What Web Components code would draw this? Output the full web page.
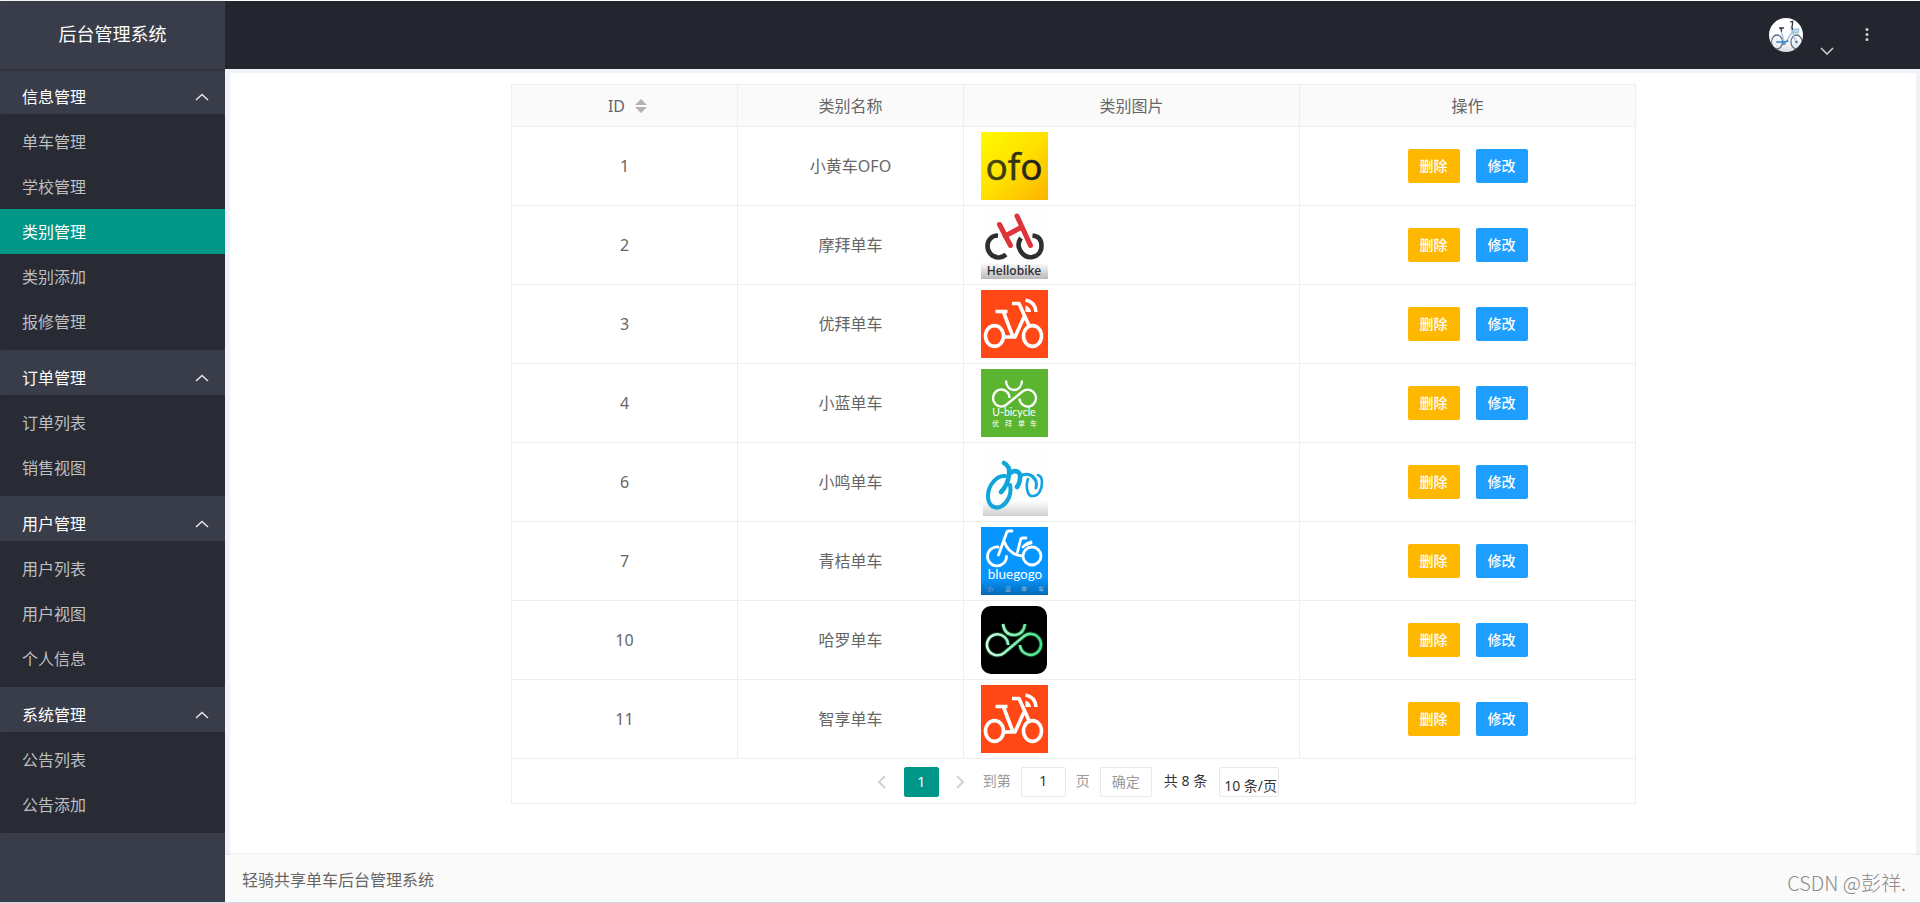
<!DOCTYPE html>
<html lang="zh-CN">
<head>
<meta charset="utf-8">
<meta name="viewport" content="width=device-width, initial-scale=1">
<title>后台管理系统</title>
<style>
  body {
    margin: 0;
    background: #fff;
    color: #666;
    font: 16px/24px "Noto Sans", "Noto Sans CJK SC", sans-serif;
  }
</style>
</head>
<body>
<admin-shell>
  <side-nav slot="side" heading="后台管理系统">
    <nav-group label="信息管理">
      <nav-item>单车管理</nav-item>
      <nav-item>学校管理</nav-item>
      <nav-item current>类别管理</nav-item>
      <nav-item>类别添加</nav-item>
      <nav-item>报修管理</nav-item>
    </nav-group>
    <nav-group label="订单管理">
      <nav-item>订单列表</nav-item>
      <nav-item>销售视图</nav-item>
    </nav-group>
    <nav-group label="用户管理">
      <nav-item>用户列表</nav-item>
      <nav-item>用户视图</nav-item>
      <nav-item>个人信息</nav-item>
    </nav-group>
    <nav-group label="系统管理">
      <nav-item>公告列表</nav-item>
      <nav-item>公告添加</nav-item>
    </nav-group>
  </side-nav>
  <top-bar slot="top"></top-bar>
  <category-table>
    <page-controls slot="pager" total="8"></page-controls>
  </category-table>
  <page-footer slot="footer">轻骑共享单车后台管理系统<span slot="mark">CSDN @彭祥.</span></page-footer>
</admin-shell>

<script>
const define = (name, render) => customElements.define(name, class extends HTMLElement {
  connectedCallback() {
    if (this.shadowRoot) return;
    this.attachShadow({ mode: 'open' }).innerHTML = render(this);
  }
});

define('admin-shell', () => `
  <style>
    :host {
      display: grid;
      grid-template: 68px 1fr auto / 225px 1fr;
      grid-template-areas: "side top" "side main" "side foot";
      box-sizing: border-box;
      min-height: 100vh;
      padding-top: 1px;
      border-bottom: 1px solid #cbdde6;
    }
    slot { display: block; min-width: 0; }
    .side { grid-area: side; background: #393d49; }
    .top { grid-area: top; }
    main { grid-area: main; background: #eff3f7; padding: 4px 4px 0 5px; display: flex; min-width: 0; }
    main slot { flex: 1; background: #fff; padding: 11px 0 16px; }
    .foot { grid-area: foot; }
  </style>
  <slot class="side" name="side"></slot>
  <slot class="top" name="top"></slot>
  <main><slot></slot></main>
  <slot class="foot" name="footer"></slot>`);

define('top-bar', () => `
  <style>
    :host { display: flex; justify-content: flex-end; align-items: center; height: 68px; background: #23262e; }
    button { all: unset; display: flex; cursor: pointer; }
    .user { gap: 17px; align-items: flex-end; padding-right: 30px; }
    .user .arrow { margin-bottom: -3px; }
    .more { padding-right: 50px; }
  </style>
  <button class="user" aria-label="用户菜单">
    <svg width="34" height="34" viewBox="0 0 34 34">
      <defs><clipPath id="c"><circle cx="17" cy="17" r="17"/></clipPath>
      <linearGradient id="f" x2="0" y2="1"><stop offset=".7" stop-color="#fff"/><stop offset="1" stop-color="#d9d9dc"/></linearGradient></defs>
      <g clip-path="url(#c)" fill="none" stroke-linecap="round">
        <rect width="34" height="34" fill="url(#f)"/>
        <g stroke="#5d6c80" stroke-width="1.3"><ellipse cx="8" cy="24" rx="5.5" ry="7"/><ellipse cx="27.500" cy="24" rx="5.500" ry="7"/></g>
        <g stroke="#c8d2de" stroke-width=".5"><path d="M8 18v12M3 24h10M4 20l8 8M12 20l-8 8M27.500 18v12M23 24h9M24 20l7 8M31 20l-7 8"/></g>
        <path d="M12 12l3 12M22 10l5 14M24 13l-8 12" stroke="#a9c3e0" stroke-width="1.500"/>
        <path d="M8 24h8l3-1M14 26h2" stroke="#2f80cc" stroke-width="1.600"/>
        <path d="M24 11h6l-1 4h-4z" fill="#b9dcf2" stroke="#72a8cf" stroke-width=".7"/>
        <path d="M10.500 10h4M12 10.500l.6 2.500M21.500 4l2-.6v3l-.6 2.600.6 2" stroke="#30333d" stroke-width="1.300"/>
        <circle cx="27.500" cy="24" r="1.300" fill="#3c80c4"/>
      </g>
    </svg>
    <svg class="arrow" width="14" height="8" viewBox="0 0 14 8" fill="none" stroke="#cfcfcf" stroke-width="1.500"><path d="M1 1l6 6 6-6"/></svg>
  </button>
  <button class="more" aria-label="更多">
    <svg width="6" height="14" viewBox="0 0 6 14" fill="#cfcfcf"><circle cx="3" cy="1.600" r="1.500"/><circle cx="3" cy="6.500" r="1.500"/><circle cx="3" cy="11.500" r="1.500"/></svg>
  </button>`);

define('side-nav', el => `
  <style>
    :host { display: block; }
    h1 {
      box-sizing: border-box; margin: 0; height: 68px; color: #fff; text-align: center;
      font-size: 18px; font-weight: 400; line-height: 66px;
      box-shadow: 0 1px 3px rgba(0,0,0,.25);
    }
  </style>
  <h1>${el.getAttribute('heading')}</h1>
  <nav><slot></slot></nav>`);

define('nav-group', el => `
  <style>
    :host { display: block; }
    button {
      box-sizing: border-box; display: flex; width: 100%; height: 45px;
      justify-content: space-between; align-items: center;
      margin: 0; padding: 11px 16px 0 22px; border: 0; background: none;
      color: #fff; font: inherit; cursor: pointer;
    }
    .items { background: #282b33; border-radius: 2px; padding: 5px 0 6px; }
  </style>
  <button aria-expanded="true"><span>${el.getAttribute('label')}</span>
    <svg width="14" height="8" viewBox="0 0 14 8" fill="none" stroke="#e6e6e8" stroke-width="1.500"><path d="M1 7l6-5.500 6 5.500"/></svg>
  </button>
  <div class="items"><slot></slot></div>`);

define('nav-item', () => `
  <style>
    :host { display: block; }
    a { display: block; padding: 2px 0 0 22px; line-height: 43px; color: #bebfc1; text-decoration: none; }
    :host([current]) a { background: #009688; color: #fff; }
  </style>
  <a href="#"><slot></slot></a>`);

define('page-footer', () => `
  <style>
    :host {
      display: flex; justify-content: space-between; align-items: center;
      height: 47px; padding: 0 14px 0 17px; background: #fafafa;
      box-shadow: 0 -1px 3px rgba(0,0,0,.08); position: relative;
    }
    .name { padding-top: 2px; }
    .mark { padding-top: 8px; color: #8c8c8c; font: 300 20px/24px "Noto Sans CJK SC", sans-serif; }
  </style>
  <span class="name"><slot></slot></span><span class="mark"><slot name="mark"></slot></span>`);

const rideShare = `
  <rect width="67" height="68" fill="#ff4815"/>
  <g fill="none" stroke="#fff" stroke-width="3.600" stroke-linejoin="round">
    <ellipse cx="13.500" cy="46" rx="9" ry="10.400"/><ellipse cx="51.500" cy="46" rx="9" ry="10.400"/>
    <path d="M23 47h11l9-20M32 47l-9.500-25M14.500 21.500h12M31 13.500h7l10 22"/>
    <path d="M44.500 10q10 2 10.500 12" stroke-width="3.400"/>
  </g>
  <path d="M44.500 15.500q5 1.500 5.500 6.500h-5.500z" fill="#fff"/>`;

const logos = {
  ofo: `
    <defs><linearGradient id="g" x2="1" y2="1"><stop stop-color="#fffb00"/><stop offset=".5" stop-color="#ffe000"/><stop offset="1" stop-color="#fbb400"/></linearGradient>
    <linearGradient id="t"><stop stop-color="#4b4712"/><stop offset="1" stop-color="#1d1f1d"/></linearGradient></defs>
    <rect width="67" height="68" fill="url(#g)"/>
    <text x="33" y="48" text-anchor="middle" font-family="Open Sans" font-size="37" fill="url(#t)" stroke="url(#t)" stroke-width=".6">ofo</text>`,
  hello: `
    <defs><linearGradient id="g" x2="0" y2="1"><stop offset=".76" stop-color="#fefefe"/><stop offset="1" stop-color="#b9b9bb"/></linearGradient></defs>
    <rect width="67" height="68" fill="url(#g)"/>
    <g fill="none" stroke-width="4.600">
      <path d="M17 24.500c-7 0-10.500 5-10.500 10.500s4 11.500 11 11.500q4 0 7.500-3M40 27c-3 4-3 9-.5 13s7 7 12 6 9-5 9-11-3-10-9-10.500" stroke="#2f2f31"/>
      <path d="M18.500 13.500l11 21M36 5l13.500 29.500M24 25l17-9" stroke="#de3338" stroke-width="5" stroke-linecap="round"/>
    </g>
    <text x="33" y="64" text-anchor="middle" font-family="Open Sans" font-weight="600" font-size="12" fill="#303034">Hellobike</text>`,
  ride: rideShare,
  ubicycle: `
    <rect width="67" height="68" fill="#5cb531"/>
    <g fill="none" stroke="#fff" stroke-width="2.300">
      <path d="M25 11.500c0 5 3 9.500 8 9.500s8-4.500 8-9.500"/>
      <path d="M28.500 29a8.200 8.500 0 1 0-3.500 7l16.500-13.500a8.200 8.500 0 1 1-3 7"/>
    </g>
    <g fill="#fff"><text x="33" y="47" text-anchor="middle" font-family="Lato" font-size="10.500">U-bicycle</text>
    <text x="11 24 37 49" y="57" font-family="Noto Sans CJK SC" font-size="7">优拜单车</text></g>`,
  ming: `
    <defs><linearGradient id="g" x2="0" y2="1"><stop offset=".78" stop-color="#fefefe"/><stop offset="1" stop-color="#cfcfd1"/></linearGradient></defs>
    <rect x="2" width="65" height="68" fill="url(#g)"/>
    <g fill="none" stroke="#12a5dc" stroke-linecap="round">
      <path d="M24 28C16 27 7 37 7 48c0 10 7 14 14 10 6-4 10-12 8-21" stroke-width="4"/>
      <path d="M23 15c4 2 6 6 5 12-1 8-4 13-8 17" stroke-width="4.600"/>
      <path d="M29 25c6-4 11-1 10 5q0 5-3 9" stroke-width="4.600"/>
      <path d="M39 28c7-4 13-1 16 5q1 3 0 7" stroke-width="3"/>
      <path d="M47 31c-3 9 0 18 5 17 6 0 9-7 9-14 0-4-1-6-4-7" stroke-width="2.600"/>
    </g>`,
  bluegogo: `
    <defs><linearGradient id="g" x2="0" y2="1"><stop offset=".75" stop-color="#0795ff"/><stop offset="1" stop-color="#056ab4"/></linearGradient></defs>
    <rect width="67" height="68" fill="url(#g)"/>
    <g fill="none" stroke="#fff" stroke-width="2.800" stroke-linecap="round">
      <path d="M17 20a9.500 9.500 0 1 0 8.500 9.500"/><circle cx="51" cy="29" r="9"/>
      <path d="M31 4h-3q-2 0-2.500 2l-8 22M23 14c3 9 9 14 18 15M45 11h-3q-2 0-2.500 2l-3 12M42 20q3-4 8-5M45 18l5-2"/>
    </g>
    <text x="34" y="52" text-anchor="middle" font-family="Lato" font-size="13.500" fill="#fff">bluegogo</text>
    <text x="6 24 40 57" y="64" font-family="Noto Sans CJK SC" font-size="6" fill="#8fb6d4">小蓝单车</text>`,
  hallo: `
    <defs><linearGradient id="g" gradientUnits="userSpaceOnUse" x1="6" x2="61"><stop stop-color="#d4f8e4"/><stop offset=".5" stop-color="#86eeb2"/><stop offset="1" stop-color="#3ce482"/></linearGradient></defs>
    <rect width="66" height="68" rx="10" fill="#000"/>
    <g fill="none">
      <g stroke="#1c7a44" stroke-width="4.500" opacity=".5"><path d="M22 18c1 7 5 11 11 11s10-4 11-11M27 39a10.500 10.500 0 1 0-4 8l19-16a10.500 10.500 0 1 1-3 8"/></g>
      <path d="M22 18c1 7 5 11 11 11s10-4 11-11M27 39a10.500 10.500 0 1 0-4 8l19-16a10.500 10.500 0 1 1-3 8" stroke="url(#g)" stroke-width="2.600"/>
    </g>`
};

define('brand-logo', el => `
  <style>:host { display: block; width: 67px; height: 68px; } svg { display: block; }</style>
  <svg width="67" height="68" viewBox="0 0 67 68" role="img">${logos[el.getAttribute('name')]}</svg>`);

define('action-button', () => `
  <style>
    :host { display: inline-flex; }
    button {
      box-sizing: border-box; width: 52px; height: 34px; padding: 0 0 2px; border: 0; border-radius: 2px;
      background: var(--tone, #1e9fff); color: #fff; font: 500 14px/32px "Noto Sans CJK SC", sans-serif; cursor: pointer;
    }
  </style>
  <button><slot></slot></button>`);

const categories = [
  [1, '小黄车OFO', 'ofo'],
  [2, '摩拜单车', 'hello'],
  [3, '优拜单车', 'ride'],
  [4, '小蓝单车', 'ubicycle'],
  [6, '小鸣单车', 'ming'],
  [7, '青桔单车', 'bluegogo'],
  [10, '哈罗单车', 'hallo'],
  [11, '智享单车', 'ride']
];

define('category-table', () => `
  <style>
    :host {
      display: block; box-sizing: border-box; width: 1125px; max-width: 100%;
      margin: 0 auto; border: 1px solid #eee;
    }
    table { width: 100%; border-collapse: separate; border-spacing: 0; table-layout: fixed; text-align: center; }
    .narrow { width: 226px; }
    .wide { width: 336px; }
    th, td { box-sizing: border-box; padding: 0 16px 0 17px; border: solid #eee; border-width: 0 1px 1px 0; }
    th:last-child, td:last-child { border-right: 0; }
    th { height: 42px; background: #fafafa; font-weight: 400; }
    td { height: 79px; }
    .sort { display: inline-flex; align-items: center; gap: 10px; color: inherit; font: inherit; border: 0; background: none; padding: 0 0 0 6px; vertical-align: top; }
    .actions { display: flex; justify-content: center; gap: 16px; }
    .warn { --tone: #ffb800; }
  </style>
  <table>
    <colgroup><col class="narrow"><col class="narrow"><col class="wide"><col></colgroup>
    <thead><tr>
      <th><button class="sort">ID<svg width="12" height="14" viewBox="0 0 12 14" fill="#b2b2b2"><path d="M6 0l6 6H0zM0 8h12l-6 6z"/></svg></button></th>
      <th>类别名称</th><th>类别图片</th><th>操作</th>
    </tr></thead>
    <tbody>${categories.map(([id, name, logo]) => `
      <tr><td>${id}</td><td>${name}</td><td><brand-logo name="${logo}"></brand-logo></td>
      <td><div class="actions"><action-button class="warn">删除</action-button><action-button>修改</action-button></div></td></tr>`).join('')}
    </tbody>
  </table>
  <slot name="pager"></slot>`);

define('page-controls', el => `
  <style>
    :host {
      display: flex; justify-content: center; align-items: center; gap: 10px;
      height: 44px; padding: 1px 0 0 3px; box-sizing: border-box; color: #999; font-size: 14px; line-height: 28px; white-space: nowrap;
    }
    button, input, select {
      box-sizing: border-box; height: 30px; margin: 0; padding: 0;
      border: 1px solid #e8e8e8; border-radius: 2px; background: #fff; color: inherit;
      font: inherit; line-height: 28px; text-align: center;
    }
    label { display: flex; gap: 10px; }
    .step { display: flex; width: 24px; border: 0; align-items: center; justify-content: center; }
    .page { width: 35px; padding-bottom: 2px; border-color: #009688; background: #009688; color: #fff; }
    input { width: 45px; padding-bottom: 2px; color: #333; }
    .go { width: 52px; }
    .count { padding: 0 2px 2px; color: #333; }
    select { width: 60px; padding: 8px 0 0 4px; appearance: none; color: #333; text-align: left; line-height: 20px; }
  </style>
  <button class="step" aria-label="上一页"><svg width="9" height="14" viewBox="0 0 9 14" fill="none" stroke="#d2d2d2" stroke-width="2"><path d="M8 1L2 7l6 6"/></svg></button>
  <button class="page" aria-current="page">1</button>
  <button class="step" aria-label="下一页"><svg width="9" height="14" viewBox="0 0 9 14" fill="none" stroke="#d2d2d2" stroke-width="2"><path d="M1 1l6 6-6 6"/></svg></button>
  <label>到第<input type="text" value="1">页</label>
  <button class="go">确定</button>
  <span class="count">共 ${el.getAttribute('total')} 条</span>
  <select aria-label="每页条数"><option>10 条/页</option></select>`);
</script>
</body>
</html>
